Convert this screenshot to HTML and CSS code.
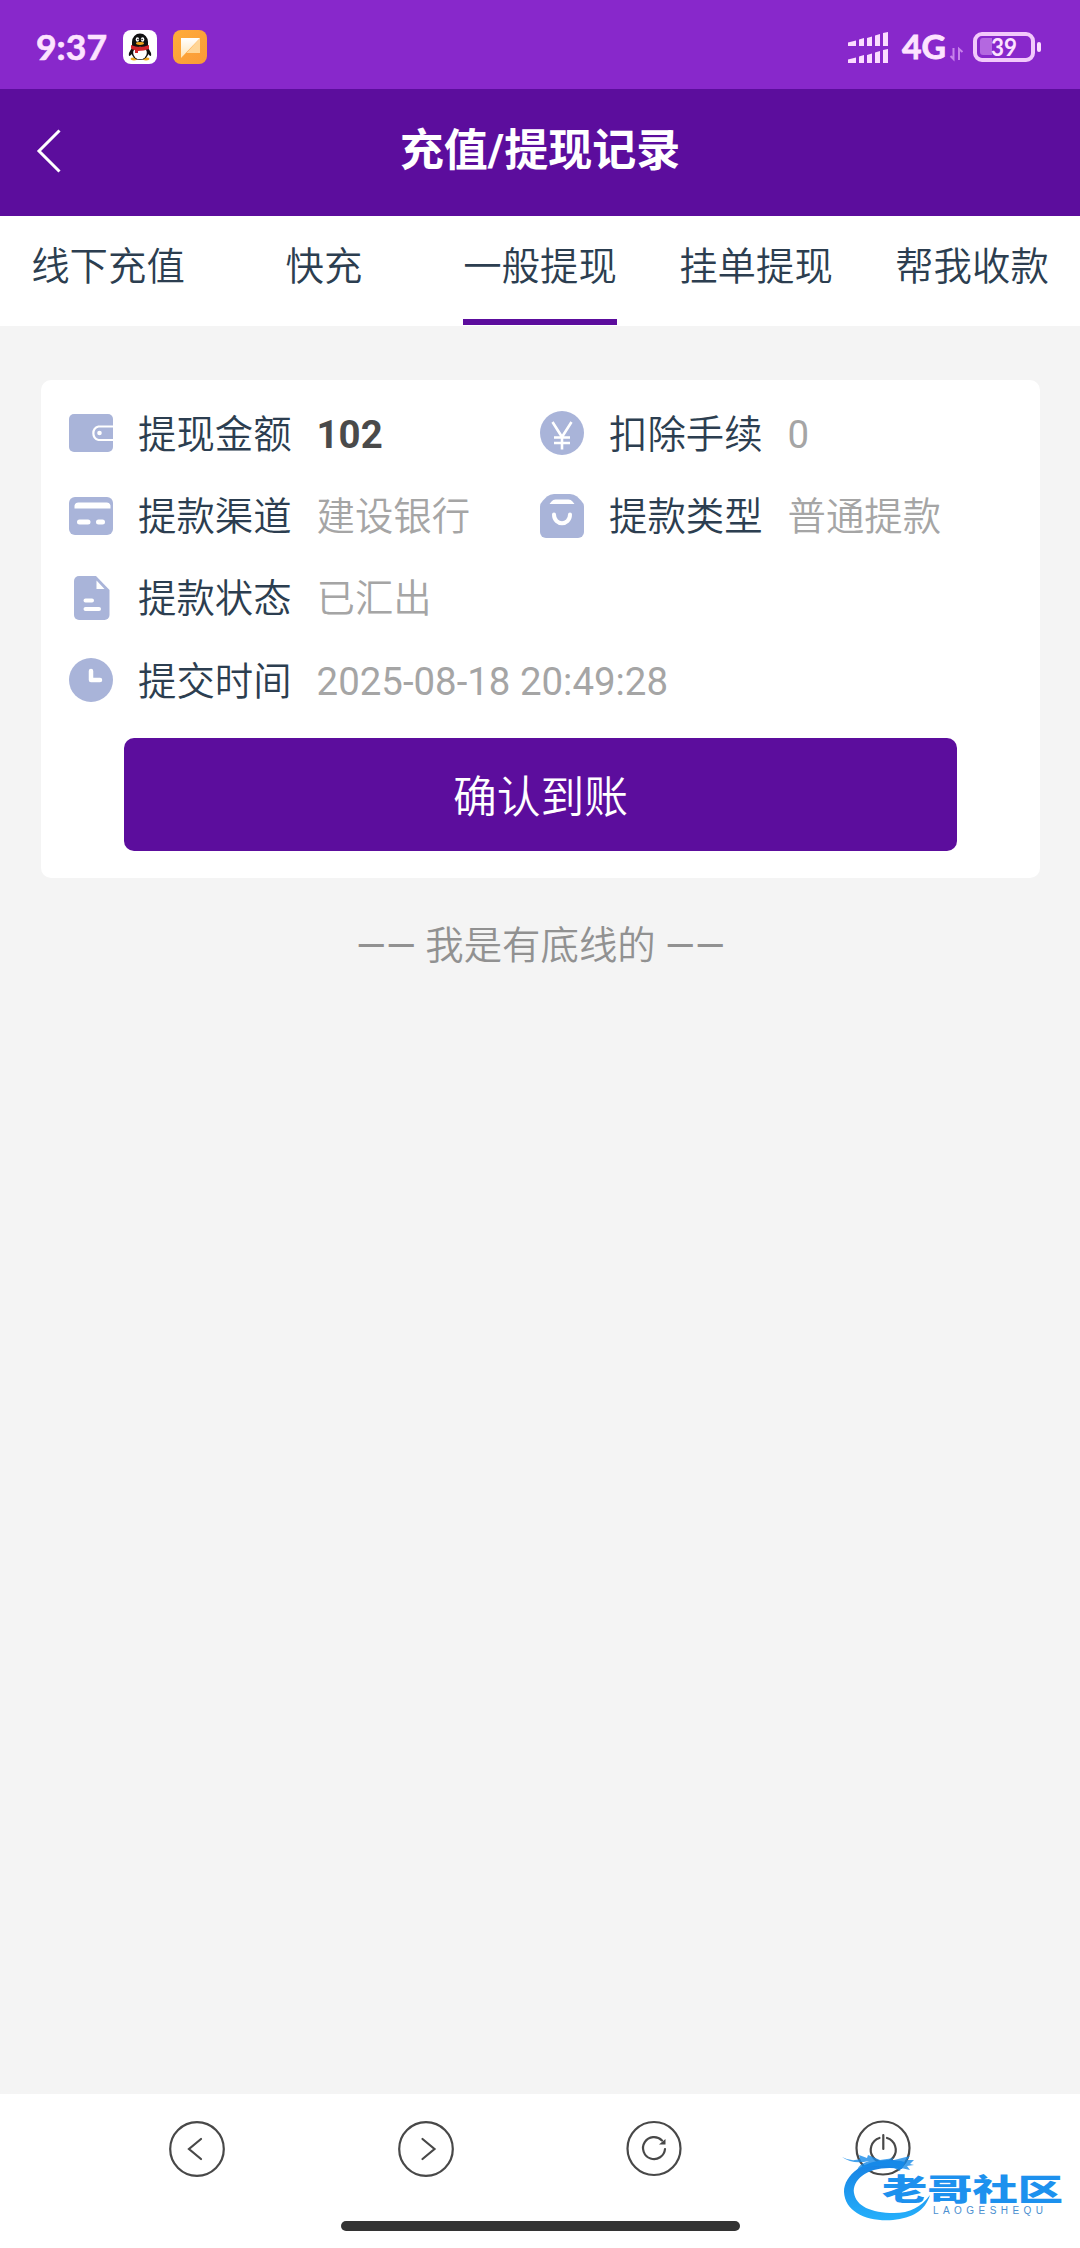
FILE: index.html
```html
<!DOCTYPE html>
<html lang="zh-CN">
<head>
<meta charset="utf-8">
<title>充值/提现记录</title>
<link rel="stylesheet" href="styles.css">
</head>
<body>
<div class="screen">
  <div class="status">
    <svg class="status-left" viewBox="0 0 240 89" width="240" height="89">
      <text class="clock" x="36" y="60" textLength="71" lengthAdjust="spacingAndGlyphs">9:37</text>
      <rect x="123" y="30" width="34" height="34" rx="8" fill="#fff"/>
      <ellipse cx="134" cy="59" rx="3.4" ry="1.4" fill="#efa51c"/>
      <ellipse cx="146" cy="59" rx="3.4" ry="1.4" fill="#efa51c"/>
      <path d="M132 48q-4 5-3 8q2 0 4-4zM148 48q4 5 3 8q-2 0-4-4z" fill="#111"/>
      <ellipse cx="140" cy="52" rx="8.6" ry="8" fill="#111"/>
      <ellipse cx="140" cy="53" rx="6.8" ry="6.3" fill="#fff"/>
      <path d="M132 46v-4a8 8.5 0 0 1 16 0v4z" fill="#111"/>
      <ellipse cx="137.400" cy="39.500" rx="1.700" ry="2.300" fill="#fff"/>
      <ellipse cx="142.600" cy="39.500" rx="1.700" ry="2.300" fill="#fff"/>
      <circle cx="137.900" cy="39.500" r=".8" fill="#111"/>
      <circle cx="142.100" cy="39.500" r=".8" fill="#111"/>
      <ellipse cx="140" cy="43.500" rx="4" ry="1.400" fill="#f3a51d"/>
      <path d="M131 45q9 4 18 0v4q-5 2-11 2v2h-3v-3q-3-.5-4-1.500z" fill="#d3262c"/>
      <defs>
        <linearGradient id="orange" x1="0" y1="0" x2="1" y2="1"><stop offset="0" stop-color="#ffac3a"/><stop offset="1" stop-color="#fa9a38"/></linearGradient>
        <linearGradient id="flag" x1="0" y1="0" x2="0" y2="1"><stop offset="0" stop-color="#fff"/><stop offset="1" stop-color="#ffe3b4"/></linearGradient>
      </defs>
      <rect x="173" y="30" width="34" height="34" rx="8" fill="url(#orange)"/>
      <path d="M200 38v15h-13.500z" fill="#ffd596"/>
      <path d="M181 38h19l-19 20z" fill="url(#flag)"/>
    </svg>
    <svg class="status-right" viewBox="840 0 240 89" width="240" height="89">
      <g fill="#fbdcff">
        <path d="M848 42.500l8-2v5.500h-8zM859 39.500l5-1.500v8h-5zM867 38l5-1.500V46h-5zM875 35.500l5-1.500v12h-5zM883 33l5-1v14h-5z"/>
        <path d="M848 59.500l8-2V63h-8zM859 56.500l5-1.500v8h-5zM867 55l5-1.500V63h-5zM875 52.500l5-1.500v12h-5zM883 50l5-1v14h-5z"/>
        <rect x="1037" y="42" width="4" height="10" rx="2"/>
      </g>
      <text class="network" x="902" y="59" textLength="44" lengthAdjust="spacingAndGlyphs">4G</text>
      <path d="M953.500 48v11l-3-3M959 60V49l3.500 3" fill="none" stroke="#c883ea" stroke-width="2"/>
      <rect x="975" y="34" width="58" height="26" rx="7" fill="none" stroke="#f2c9fb" stroke-width="4"/>
      <path d="M983 38h9v17h-9a3 3 0 0 1-3-3V41a3 3 0 0 1 3-3z" fill="#b468e0"/>
      <text class="battery" x="991" y="55.500" textLength="26" lengthAdjust="spacingAndGlyphs">39</text>
    </svg>
  </div>

  <header class="header">
    <svg class="back" viewBox="0 0 26 44" width="26" height="44"><path d="M23.500 1.500L3 22l20.500 20.500" fill="none" stroke="#fff" stroke-width="3"/></svg>
    <h1 class="title">充值/提现记录</h1>
  </header>

  <nav class="tabs">
    <a class="tab">线下充值</a>
    <a class="tab">快充</a>
    <a class="tab"><span class="active">一般提现</span></a>
    <a class="tab">挂单提现</a>
    <a class="tab">帮我收款</a>
  </nav>

  <main class="content">
    <section class="card">
      <div class="grid">
        <div class="field">
          <svg class="icon" viewBox="0 0 44 44"><rect y="3" width="44" height="38" rx="5" fill="#a9b4d9"/><path d="M44 15.500H29.500a7 7 0 0 0 0 13.500H44" fill="none" stroke="#fff" stroke-width="2.200"/><circle cx="30.500" cy="22" r="2.300" fill="#fff"/></svg>
          <span class="label">提现金额</span><span class="value number strong">102</span>
        </div>
        <div class="field">
          <svg class="icon" viewBox="0 0 44 44"><circle cx="22" cy="22" r="22" fill="#a9b4d9"/><path d="M12.500 11L22 26l9.500-15M22 26v12.500M14 26.500h16M14 32h16" fill="none" stroke="#fff" stroke-width="2.600"/></svg>
          <span class="label">扣除手续</span><span class="value number">0</span>
        </div>
        <div class="field">
          <svg class="icon" viewBox="0 0 44 44"><rect y="3" width="44" height="38" rx="6" fill="#a9b4d9"/><path d="M5.500 14.500v-3a4 4 0 0 1 4-3h28a4 4 0 0 1 4 3v3z" fill="#fff"/><path d="M10.500 28h8.500M29.500 28h4" stroke="#fff" stroke-width="5" stroke-linecap="round"/></svg>
          <span class="label">提款渠道</span><span class="value">建设银行</span>
        </div>
        <div class="field">
          <svg class="icon" viewBox="0 0 44 44"><path d="M14 0h16q4 0 7 2.500l4 4q3 3 3 6V38a6 6 0 0 1-6 6H6a6 6 0 0 1-6-6V12.500q0-3 3-6l4-4Q10 0 14 0z" fill="#a9b4d9"/><path d="M9.500 10l2-2.500q1.500-2 4-2h13q2.500 0 4 2l2 2.500z" fill="#fff"/><path d="M14 20.500c0 11.500 16 11.500 16 0" fill="none" stroke="#fff" stroke-width="4" stroke-linecap="round"/></svg>
          <span class="label">提款类型</span><span class="value">普通提款</span>
        </div>
        <div class="field wide">
          <svg class="icon" viewBox="0 0 44 44"><path d="M10 0h17l13.500 14v25a5 5 0 0 1-5 5H10a5 5 0 0 1-5-5V5a5 5 0 0 1 5-5z" fill="#a9b4d9"/><path d="M27.500 4.500l8 8.500h-8z" fill="#fff"/><path d="M16.500 24.500H23M16.500 33H30" stroke="#fff" stroke-width="4" stroke-linecap="round"/></svg>
          <span class="label">提款状态</span><span class="value">已汇出</span>
        </div>
        <div class="field wide">
          <svg class="icon" viewBox="0 0 44 44"><circle cx="22" cy="22" r="22" fill="#a9b4d9"/><path d="M22 13v9h9" fill="none" stroke="#fff" stroke-width="4.500" stroke-linecap="round" stroke-linejoin="round"/></svg>
          <span class="label">提交时间</span><span class="value number">2025-08-18 20:49:28</span>
        </div>
      </div>
      <button class="confirm">确认到账</button>
    </section>
    <p class="end"><span class="dash">——</span> 我是有底线的 <span class="dash">——</span></p>
  </main>

  <footer class="toolbar">
    <svg class="tool" viewBox="0 0 58 58"><circle cx="29" cy="29" r="26.800"/><path d="M33 19L21 29l12 10"/></svg>
    <svg class="tool" viewBox="0 0 58 58"><circle cx="29" cy="29" r="26.800"/><path d="M25.500 19l12 10-12 10"/></svg>
    <svg class="tool" viewBox="0 0 58 58"><circle cx="29" cy="28.500" r="26.500"/><path d="M40 29a11 11 0 1 1-3-8.500"/><path class="tip" d="M40.500 19v5.500H34z"/></svg>
    <svg class="tool" viewBox="0 0 58 58"><circle cx="29" cy="28" r="26.500"/><path d="M25.500 18a12.500 12.500 0 1 0 7.500 0M29.300 15v14"/></svg>
    <div class="homebar"></div>
    <svg class="watermark" viewBox="835 2140 245 100" width="245" height="100">
      <defs><linearGradient id="blue" x1="0" y1="0" x2="0" y2="1"><stop offset="0" stop-color="#177fe2"/><stop offset="1" stop-color="#25b0fb"/></linearGradient></defs>
      <path d="M905 2162c-32-8-61 9-61 30 1 20 23 30 49 28 19-2 32-9 37-25-9 12-20 18-36 18-23 0-38-7-40-20-2-15 17-29 48-24z" fill="url(#blue)"/>
      <path d="M842 2157q9 5 18 2l-1-4 8 3 1-3 12 5 14-2-4 3 20-5-3 4h7l-4 4 4 1-7 1 3 4-9-2-1 3-8-4q-20-3-35 3 2-6 12-9-16 4-27-4z" fill="#168be8" opacity=".8"/>
      <g transform="translate(882 2200) scale(1 .65)"><text class="mark" x="0" y="0" textLength="181" lengthAdjust="spacingAndGlyphs">老哥社区</text></g>
      <text class="mark-small" x="933" y="2214" textLength="110" lengthAdjust="spacing">LAOGESHEQU</text>
    </svg>
  </footer>
</div>
</body>
</html>
```
FILE: styles.css
```css
* { box-sizing: border-box; }

body {
  margin: 0;
  background: #f4f4f4;
  font-family: Roboto, "Noto Sans CJK SC", sans-serif;
  font-size: 38.4px;
  font-weight: 350;
  color: #2c3e50;
}

.screen {
  width: 1080px;
  height: 2248px;
  display: flex;
  flex-direction: column;
  overflow: hidden;
}

.status {
  height: 89px;
  flex: none;
  display: flex;
  justify-content: space-between;
  background: #8828cb;
}

.clock, .network, .battery {
  font-family: Lato, sans-serif;
  font-weight: 700;
  fill: #fde3ff;
}
.clock { font-size: 35px; stroke: #fde3ff; stroke-width: .6; }
.network { font-size: 33px; stroke: #fde3ff; stroke-width: .8; }
.battery { font-size: 24px; }

.header {
  height: 127px;
  flex: none;
  display: grid;
  grid-template-columns: 100px 1fr 100px;
  align-items: center;
  padding-bottom: 4px;
  background: #5c0d9d;
}
.back { margin-left: 36px; }
.title {
  margin: 0;
  text-align: center;
  font-size: 44px;
  font-weight: 700;
  line-height: 60px;
  color: #fff;
}

.tabs {
  height: 110px;
  flex: none;
  display: grid;
  grid-template-columns: repeat(5, 1fr);
  background: #fff;
}
.tab {
  display: flex;
  justify-content: center;
  line-height: 102px;
  white-space: nowrap;
}
.active {
  height: 109px;
  border-bottom: 6px solid #5c0d9d;
}

.content {
  flex: 1;
  padding: 54px 40px 0 41px;
}
.card {
  height: 498px;
  padding: 12px 28px 0;
  border-radius: 10px;
  background: #fff;
}
.grid {
  display: grid;
  grid-template-columns: 471px 473px;
  grid-auto-rows: 82.400px;
}
.field {
  display: flex;
  align-items: center;
  white-space: nowrap;
}
.wide { grid-column: 1 / -1; }
.icon {
  width: 44px;
  height: 44px;
  flex: none;
  margin-right: 25px;
}
.label {
  margin-right: 25px;
  padding-bottom: 5px;
}
.value {
  padding-bottom: 5px;
  color: #a5a5a5;
}
.number {
  padding: 2px 0 0;
  font-weight: 400;
}
.strong {
  font-weight: 700;
  color: #4a4a4a;
}

.confirm {
  display: block;
  width: 833px;
  height: 113px;
  margin: 16px auto 0;
  padding: 0;
  border: 0;
  border-radius: 10px;
  background: #5c0d9d;
  color: #fff;
  font: inherit;
  font-size: 43.800px;
}

.end {
  margin: 39px 0 0;
  text-align: center;
  line-height: 58px;
  color: #919191;
}
.dash { font-weight: 400; }

.toolbar {
  position: relative;
  height: 154px;
  flex: none;
  display: grid;
  grid-template-columns: repeat(4, 228.400px);
  grid-template-rows: 110px 44px;
  justify-content: center;
  justify-items: center;
  align-items: center;
  background: #fff;
}
.tool {
  width: 58px;
  height: 58px;
  fill: none;
  stroke: #484848;
  stroke-width: 2.200;
  stroke-linecap: round;
}
.tip { fill: #484848; stroke: none; }
.homebar {
  grid-column: 1 / -1;
  width: 399px;
  height: 10px;
  border-radius: 5px;
  background: #333;
}
.watermark {
  position: absolute;
  right: 0;
  bottom: 8px;
}
.mark {
  font-family: "Noto Sans CJK SC", sans-serif;
  font-size: 46px;
  font-weight: 900;
  fill: #1d91ee;
}
.mark-small {
  font-family: "Liberation Sans", sans-serif;
  font-size: 10px;
  font-weight: 400;
  fill: #4b8fd0;
}
```
